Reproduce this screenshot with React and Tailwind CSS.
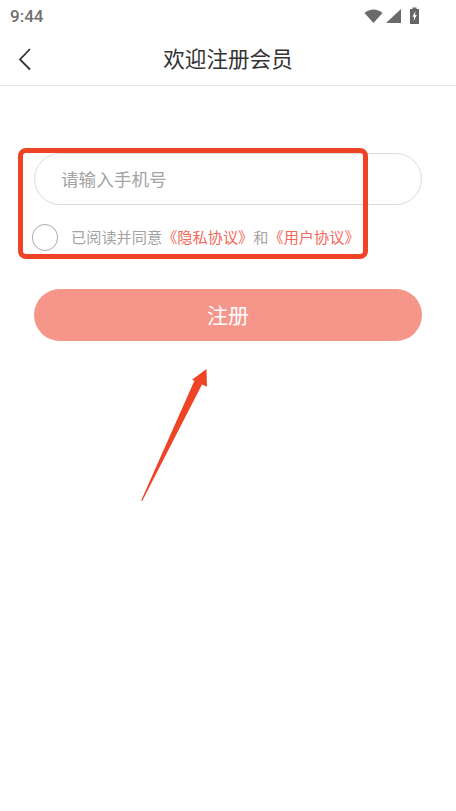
import React from 'react';

const cjk = '[font-family:"Noto_Sans_CJK_SC","Noto_Sans",sans-serif]';

const StatusIcons = () => (
  <div className="flex items-center">
    <svg width="20" height="16" viewBox="0 0 20 16" className="block">
      <path d="M0.5 5 C5.5 0.2 13.5 0.2 18.5 5 L9.5 15 Z" fill="#6a6a6a" />
    </svg>
    <svg width="17" height="16" viewBox="0 0 17 16" className="ml-[1px] block">
      <path d="M16 1 V15 H1 Z" fill="#6a6a6a" />
    </svg>
    <svg width="12" height="18" viewBox="0 0 12 18" className="ml-[7px] block">
      <path d="M3.5 0.5 H7.5 V2 H10 V17 H1 V2 H3.5 Z" fill="#666" />
      <path d="M6.6 4 L3.4 9.8 H5.2 L4.6 14 L7.8 8 H6 Z" fill="#fff" />
    </svg>
  </div>
);

export default function App() {
  return (
    <div className={`relative w-[456px] h-[811px] bg-white overflow-hidden ${cjk}`}>
      {/* status bar */}
      <div className="h-[32px] pl-[10px] pr-[35px] flex items-center justify-between">
        <span className="text-[17px] leading-none text-[#707070] font-medium [font-family:Roboto,sans-serif]">9:44</span>
        <StatusIcons />
      </div>

      {/* title bar */}
      <div className="relative h-[54px] pb-[2px] flex items-center justify-center border-b border-[#e5e5e5]">
        <svg width="14" height="24" viewBox="0 0 14 24" className="absolute left-[18px] top-[15px]" fill="none">
          <path d="M12 2 L2 12.5 L12 22.5" stroke="#333" strokeWidth="1.8" />
        </svg>
        <h1 className="text-[21.6px] leading-none font-normal text-[#333]">欢迎注册会员</h1>
      </div>

      <div className="px-[34px] pt-[67px]">
        <div className="h-[52px] rounded-full border border-[#dcdcdc] flex items-center pl-[26px] text-[17.6px] text-[#a3a3a3]">
          请输入手机号
        </div>

        <div className="mt-[19px] -ml-[2px] flex items-center h-[27px]">
          <span className="w-[26px] h-[27px] rounded-full border border-[#aaa] shrink-0" />
          <p className="ml-[13px] pb-[1px] text-[15.2px] leading-none text-[#a3a3a3] whitespace-nowrap">
            已阅读并同意<span className="text-[#f4685a]">《隐私协议》</span>和<span className="text-[#f4685a]">《用户协议》</span>
          </p>
        </div>

        <button className="mt-[38px] pb-[1px] w-full h-[52px] rounded-full bg-[#f6968a] text-white text-[21px]">
          注册
        </button>
      </div>

      {/* red annotation box */}
      <div className="absolute left-[18px] top-[148px] w-[350px] h-[111px] border-[5px] border-[#ef4325] rounded-[8px] pointer-events-none" />

      {/* red annotation arrow */}
      <svg width="456" height="811" viewBox="0 0 456 811" className="absolute left-0 top-0 pointer-events-none">
        <path d="M141.2 500.6 L142.2 501 L202 384.5 L207 386.7 L206.5 369 L191.7 380 L194.5 380.5 Z" fill="#ef4325" />
      </svg>
    </div>
  );
}
